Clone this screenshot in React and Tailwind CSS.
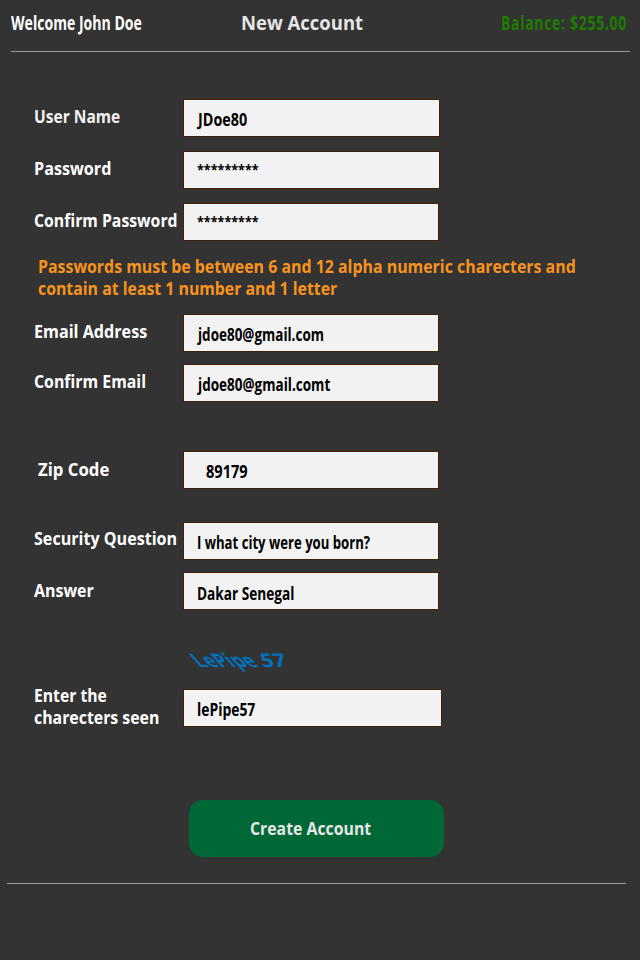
import { useLayoutEffect, useRef, useState } from "react";
import clsx from "clsx";

// Single line of text condensed horizontally to the width of its box.
function Fit({ className, children }) {
  const box = useRef(null);
  const text = useRef(null);
  const [scale, setScale] = useState(1);

  useLayoutEffect(() => {
    const measure = () => {
      if (text.current?.offsetWidth) {
        setScale(box.current.clientWidth / text.current.offsetWidth);
      }
    };
    measure();
    document.fonts.ready.then(measure);
  }, []);

  return (
    <span ref={box} className={clsx("block shrink-0 whitespace-nowrap", className)}>
      <span ref={text} className="inline-block origin-left align-top" style={{ transform: `scaleX(${scale})` }}>
        {children}
      </span>
    </span>
  );
}

function Row({ label, labelBox = "pt-[7px]", labelWidth, field = "w-64", value, valueBox, valueWidth, className }) {
  return (
    <div className={clsx("flex h-[38px] items-start", className)}>
      <label className={clsx("w-[150px] shrink-0 text-[17px] leading-[22px]", labelBox)}>
        <Fit className={clsx("ml-px", labelWidth)}>{label}</Fit>
      </label>
      <div className={clsx("h-[38px] border border-[#42210b] bg-[#f2f2f2] leading-[22px] text-black", field, valueBox)}>
        <Fit className={valueWidth}>{value}</Fit>
      </div>
    </div>
  );
}

export default function App() {
  return (
    <div className="h-[960px] w-[640px] overflow-hidden bg-[#333333] font-['Open_Sans','Noto_Sans',sans-serif] font-bold text-white">
      <header className="ml-[11px] flex h-[52px] w-[619px] items-start border-b border-[#999999] pt-[9px] leading-[28px]">
        <Fit className="w-[131px] text-[19px]">Welcome John Doe</Fit>
        <h1 className="ml-[99px] text-[20px] text-[#e6e6e6]">
          <Fit className="w-[122px]">New Account</Fit>
        </h1>
        <Fit className="ml-[138px] w-[126px] text-[19px] tracking-[1px] text-[#1e7d00]">Balance: $255.00</Fit>
      </header>

      <form className="pl-[33px] pt-[47px]">
        <Row label="User Name" labelBox="pt-[7px] text-[#f2f2f2]" labelWidth="w-[86px]" field="w-[257px]" value="JDoe80" valueBox="pl-[14px] pt-[9px] text-[17px]" valueWidth="w-[49px]" />
        <Row className="mt-[14px]" label="Password" labelWidth="w-[77px]" field="w-[257px]" value="*********" valueBox="pl-[13px] pt-[6px] text-[15px]" valueWidth="w-[62px]" />
        <Row className="mt-[14px]" label="Confirm Password" labelWidth="w-[144px]" value="*********" valueBox="pl-[13px] pt-[6px] text-[15px]" valueWidth="w-[62px]" />

        <div className="mt-[15px] h-[58px] pl-[5px] text-[17px] leading-[22px] text-[#f7931e]">
          <Fit className="w-[538px]">Passwords must be between 6 and 12 alpha numeric charecters and</Fit>
          <Fit className="w-[299px]">contain at least 1 number and 1 letter</Fit>
        </div>

        <Row label="Email Address" labelWidth="w-[113px]" value="jdoe80@gmail.com" valueBox="pl-[14px] pt-[9px] text-[17px]" valueWidth="w-[126px]" />
        <Row className="mt-[12px]" label="Confirm Email" labelWidth="w-[112px]" value="jdoe80@gmail.comt" valueBox="pl-[14px] pt-[9px] text-[17px]" valueWidth="w-[132px]" />
        <Row className="mt-[49px]" label="Zip Code" labelBox="pl-[4px] pt-[8px]" labelWidth="w-[71px]" value="89179" valueBox="pl-[22px] pt-[9px] text-[17px]" valueWidth="w-[42px]" />
        <Row className="mt-[33px]" label="Security Question" labelBox="pt-[6px]" labelWidth="w-[143px]" value="I what city were you born?" valueBox="pl-[13px] pt-[9px] text-[17px]" valueWidth="w-[173px]" />
        <Row className="mt-[12px]" label="Answer" labelBox="pt-[8px]" labelWidth="w-[60px]" value="Dakar Senegal" valueBox="pl-[13px] pt-[10px] text-[17px]" valueWidth="w-[97px]" />

        {/* Captcha: the word leans back harder than the digits */}
        <div className="mt-[37px] flex h-[42px] items-start pl-[167px] text-[19px] leading-[26px] text-[#0071bc]">
          <div className="w-[61px] origin-[50%_80%] skew-x-[42deg]">
            <Fit className="w-[61px]">LePipe</Fit>
          </div>
          <div className="ml-[2px] w-[25px] origin-[50%_80%] skew-x-[16deg]">
            <Fit className="w-[25px]">57</Fit>
          </div>
        </div>

        <div className="flex h-[38px] items-start">
          <label className="-mt-[4px] w-[150px] shrink-0 text-[17px] leading-[22px]">
            <Fit className="ml-px w-[73px]">Enter the</Fit>
            <Fit className="ml-px w-[125px]">charecters seen</Fit>
          </label>
          <div className="h-[38px] w-[259px] border border-[#42210b] bg-[#f2f2f2] pl-[13px] pt-[9px] text-[17px] leading-[22px] text-black">
            <Fit className="w-[58px]">lePipe57</Fit>
          </div>
        </div>

        <button type="button" className="ml-[156px] mt-[73px] flex h-[57px] w-[255px] items-start rounded-[14px] bg-[#006837] pl-[61px] pt-[18px] text-[17px] leading-[22px] text-[#e6e6e6]">
          <Fit className="w-[121px]">Create Account</Fit>
        </button>
      </form>

      <hr className="ml-[7px] mt-[26px] w-[619px] border-t border-[#999999]" />
    </div>
  );
}
